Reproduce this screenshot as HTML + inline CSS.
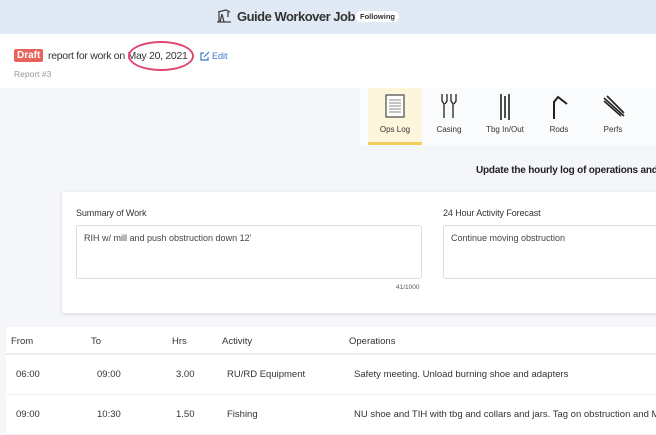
<!DOCTYPE html>
<html><head><style>
*{box-sizing:border-box;margin:0;padding:0}
body{width:656px;height:413px;overflow:hidden;background:#f4f6f9;font-family:"Liberation Sans",sans-serif;color:#333;position:relative}
.hdr{position:absolute;left:0;top:0;width:656px;height:34px;background:#e1e9f4}
.title{position:absolute;left:237px;top:9px;font-size:13px;font-weight:bold;color:#333;letter-spacing:-0.5px}
.follow{position:absolute;left:356px;top:11px;font-size:7.5px;font-weight:bold;background:#fff;border-radius:6px;padding:1px 4px;color:#333}
.top{position:absolute;left:0;top:34px;width:656px;height:54px;background:#fff}
.draft{position:absolute;left:14px;top:49px;background:#e8615a;color:#fff;font-size:10px;font-weight:bold;padding:1px 3px;border-radius:2px}
.rep{position:absolute;left:48px;top:50px;font-size:10.5px;color:#333;letter-spacing:-0.3px}
.circle{position:absolute;left:128px;top:41px;width:66px;height:30px;border:2px solid #e04870;border-radius:50%}
.edit{position:absolute;left:200px;top:51px;font-size:9px;color:#3a78c8}
.rn{position:absolute;left:14px;top:69px;font-size:8.5px;color:#999}
.tabs{position:absolute;left:360px;top:88px;width:296px;height:57px;background:#fafbfc}
.tab{position:absolute;top:0;width:54px;height:57px;text-align:center;font-size:8px;color:#333}
.tab span{position:absolute;left:0;right:0;top:37px}
.tab.on{background:#fdf5dc;border-bottom:3px solid #f2cf5c}
.upd{position:absolute;left:476px;top:165px;font-size:10px;font-weight:bold;color:#222;white-space:nowrap;letter-spacing:-0.2px}
.card{position:absolute;left:62px;top:192px;width:600px;height:121px;background:#fff;box-shadow:0 1px 4px rgba(0,0,0,.12);border-radius:2px}
.lbl{position:absolute;font-size:9px;color:#333;letter-spacing:-0.1px}
.ta{position:absolute;height:54px;border:1px solid #ddd;border-radius:3px;font-size:9px;color:#444;padding:7px 7px}
.cnt{position:absolute;left:396px;top:284px;font-size:6.5px;color:#555}
.tbl{position:absolute;left:6px;top:327px;width:650px;background:#fff}
.row{position:relative;height:40px;border-bottom:1px solid #eee;font-size:9.5px;color:#333}
.row.h{height:28px;border-bottom:2px solid #eee}
.row div{position:absolute;top:14px;white-space:nowrap}
.row.h div{top:9px}
</style></head><body>
<div class="hdr"></div>
<svg style="position:absolute;left:216px;top:9px" width="16" height="14" viewBox="0 0 16 14"><path d="M2 3 L10 1 L14 3 M3 3 V13 M6 5 L4 13 M6 5 L8 13 M1 13 H15 M12 3 V8" stroke="#444" stroke-width="1.3" fill="none"/></svg>
<div class="title">Guide Workover Job</div>
<div class="follow">Following</div>
<div class="top"></div>
<div class="draft">Draft</div>
<div class="rep">report for work on May 20, 2021</div>
<div class="circle"></div>
<svg style="position:absolute;left:200px;top:51px" width="10" height="10" viewBox="0 0 10 10"><path d="M4 2H1V9H8V6 M4 6L9 1" stroke="#3a78c8" stroke-width="1.2" fill="none"/></svg>
<div class="edit" style="left:212px">Edit</div>
<div class="rn">Report #3</div>
<div class="tabs">
 <div class="tab on" style="left:8px"><svg style="position:absolute;left:17px;top:6px" width="20" height="24"><rect x="1" y="1" width="18" height="22" fill="#fff" stroke="#555" stroke-width="1.3"/><path d="M4 6H16M4 9H16M4 12H16M4 15H16M4 18H16" stroke="#888"/></svg><span>Ops Log</span></div>
 <div class="tab" style="left:62px"><svg style="position:absolute;left:16px;top:5px" width="22" height="26"><path d="M4 1V8L6 11V25M9 1V8L7 11M13 1V8L15 11V25M18 1V8L16 11" stroke="#222" stroke-width="1.3" fill="none"/></svg><span>Casing</span></div>
 <div class="tab" style="left:118px"><svg style="position:absolute;left:20px;top:5px" width="14" height="28"><path d="M3 1V27M11 1V27M7 3V25" stroke="#222" stroke-width="1.6" fill="none"/></svg><span>Tbg In/Out</span></div>
 <div class="tab" style="left:172px"><svg style="position:absolute;left:17px;top:6px" width="22" height="26"><path d="M5 25V8L9 3L18 10" stroke="#222" stroke-width="2" fill="none"/></svg><span>Rods</span></div>
 <div class="tab" style="left:226px"><svg style="position:absolute;left:16px;top:6px" width="24" height="24"><path d="M2 4L22 22M5 2L22 19M2 7L19 22" stroke="#222" stroke-width="1.6" fill="none"/></svg><span>Perfs</span></div>
</div>
<div class="upd">Update the hourly log of operations and</div>
<div class="card"></div>
<div class="lbl" style="left:76px;top:208px">Summary of Work</div>
<div class="ta" style="left:76px;top:225px;width:346px">RIH w/ mill and push obstruction down 12'</div>
<div class="cnt">41/1000</div>
<div class="lbl" style="left:443px;top:208px">24 Hour Activity Forecast</div>
<div class="ta" style="left:443px;top:225px;width:230px">Continue moving obstruction</div>
<div class="tbl">
 <div class="row h"><div style="left:5px">From</div><div style="left:85px">To</div><div style="left:166px">Hrs</div><div style="left:216px">Activity</div><div style="left:343px">Operations</div></div>
 <div class="row"><div style="left:10px">06:00</div><div style="left:91px">09:00</div><div style="left:170px">3.00</div><div style="left:221px">RU/RD Equipment</div><div style="left:348px">Safety meeting. Unload burning shoe and adapters</div></div>
 <div class="row"><div style="left:10px">09:00</div><div style="left:91px">10:30</div><div style="left:170px">1.50</div><div style="left:221px">Fishing</div><div style="left:348px">NU shoe and TIH with tbg and collars and jars. Tag on obstruction and M</div></div>
</div>
</body></html>
